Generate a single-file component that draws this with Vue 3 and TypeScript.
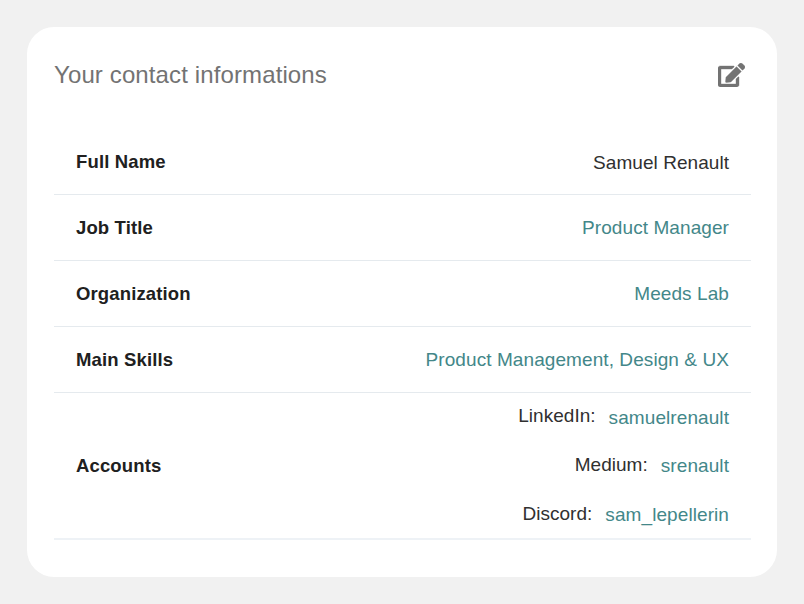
<script setup lang="ts">
interface Row { label: string; value: string; link: boolean }
interface Account { name: string; handle: string }
const rows: Row[] = [
  { label: 'Full Name', value: 'Samuel Renault', link: false },
  { label: 'Job Title', value: 'Product Manager', link: true },
  { label: 'Organization', value: 'Meeds Lab', link: true },
  { label: 'Main Skills', value: 'Product Management, Design & UX', link: true },
]
const accounts: Account[] = [
  { name: 'LinkedIn', handle: 'samuelrenault' },
  { name: 'Medium', handle: 'srenault' },
  { name: 'Discord', handle: 'sam_lepellerin' },
]
</script>

<template>
  <main class="page">
    <section class="card">
      <header class="head">
        <h1>Your contact informations</h1>
        <button class="edit" aria-label="Edit">
          <svg viewBox="0 0 576 512" width="27" height="24"><path fill="currentColor" stroke="currentColor" stroke-width="8" d="M402.600 83.200l90.200 90.200c3.800 3.800 3.800 10 0 13.800L274.400 405.600l-92.800 10.300c-12.400 1.400-22.900-9.100-21.500-21.500l10.300-92.800L388.800 83.200c3.800-3.800 10-3.800 13.800 0zm162-22.900l-48.800-48.800c-15.200-15.200-39.900-15.200-55.200 0l-35.400 35.400c-3.800 3.800-3.800 10 0 13.800l90.200 90.200c3.800 3.800 10 3.800 13.800 0l35.400-35.400c15.200-15.300 15.200-40 0-55.200zM384 346.200V448H64V128h229.800c3.200 0 6.200-1.300 8.500-3.500l40-40c7.600-7.600 2.200-20.500-8.500-20.500H48C21.500 64 0 85.500 0 112v352c0 26.500 21.500 48 48 48h352c26.500 0 48-21.500 48-48V306.200c0-10.700-12.900-16-20.500-8.500l-40 40c-2.200 2.300-3.500 5.300-3.500 8.500z" /></svg>
        </button>
      </header>
      <div v-for="row in rows" :key="row.label" class="row">
        <span class="label">{{ row.label }}</span>
        <span :class="row.link ? 'link' : 'plain'">{{ row.value }}</span>
      </div>
      <div class="row accounts">
        <span class="label">Accounts</span>
        <div class="list">
          <div v-for="a in accounts" :key="a.name" class="account">
            <span class="name">{{ a.name }}:</span>
            <span class="link">{{ a.handle }}</span>
          </div>
        </div>
      </div>
    </section>
  </main>
</template>

<style>
body { background: #f1f1f1; }
</style>
<style scoped>
.page { box-sizing: border-box; height: 604px; padding: 27px; background: #f1f1f1; font-family: "Liberation Sans", Arial, sans-serif; color: #303030; }
.card { box-sizing: border-box; height: 550px; padding: 0 26px 0 27px; background: #fff; border-radius: 27px; }
.head { display: flex; align-items: center; justify-content: space-between; height: 102px; box-sizing: border-box; padding: 0 6px 6px 0; }
h1 { margin: 0; font-size: 24px; font-weight: 400; letter-spacing: 0.12px; color: #737373; }
.edit { display: flex; padding: 0; border: 0; background: none; color: #737373; }
.row { box-sizing: border-box; display: flex; align-items: center; justify-content: space-between; height: 66px; padding: 0 22px; border-bottom: 1px solid #e5eaee; font-size: 19px; }
.label { font-size: 18.5px; font-weight: 700; letter-spacing: 0.14px; color: #202020; }
.plain { padding-top: 2px; letter-spacing: 0.05px; }
.link { color: #438789; letter-spacing: 0.08px; }
.accounts { height: 147px; border-bottom: 2px solid #eef2f6; }
.list { height: 147px; }
.account { display: flex; justify-content: flex-end; align-items: center; height: 49px; }
.name { margin-right: 13px; padding-bottom: 2px; letter-spacing: 0.03px; }
.account:first-child .link { padding-top: 2px; }
</style>
